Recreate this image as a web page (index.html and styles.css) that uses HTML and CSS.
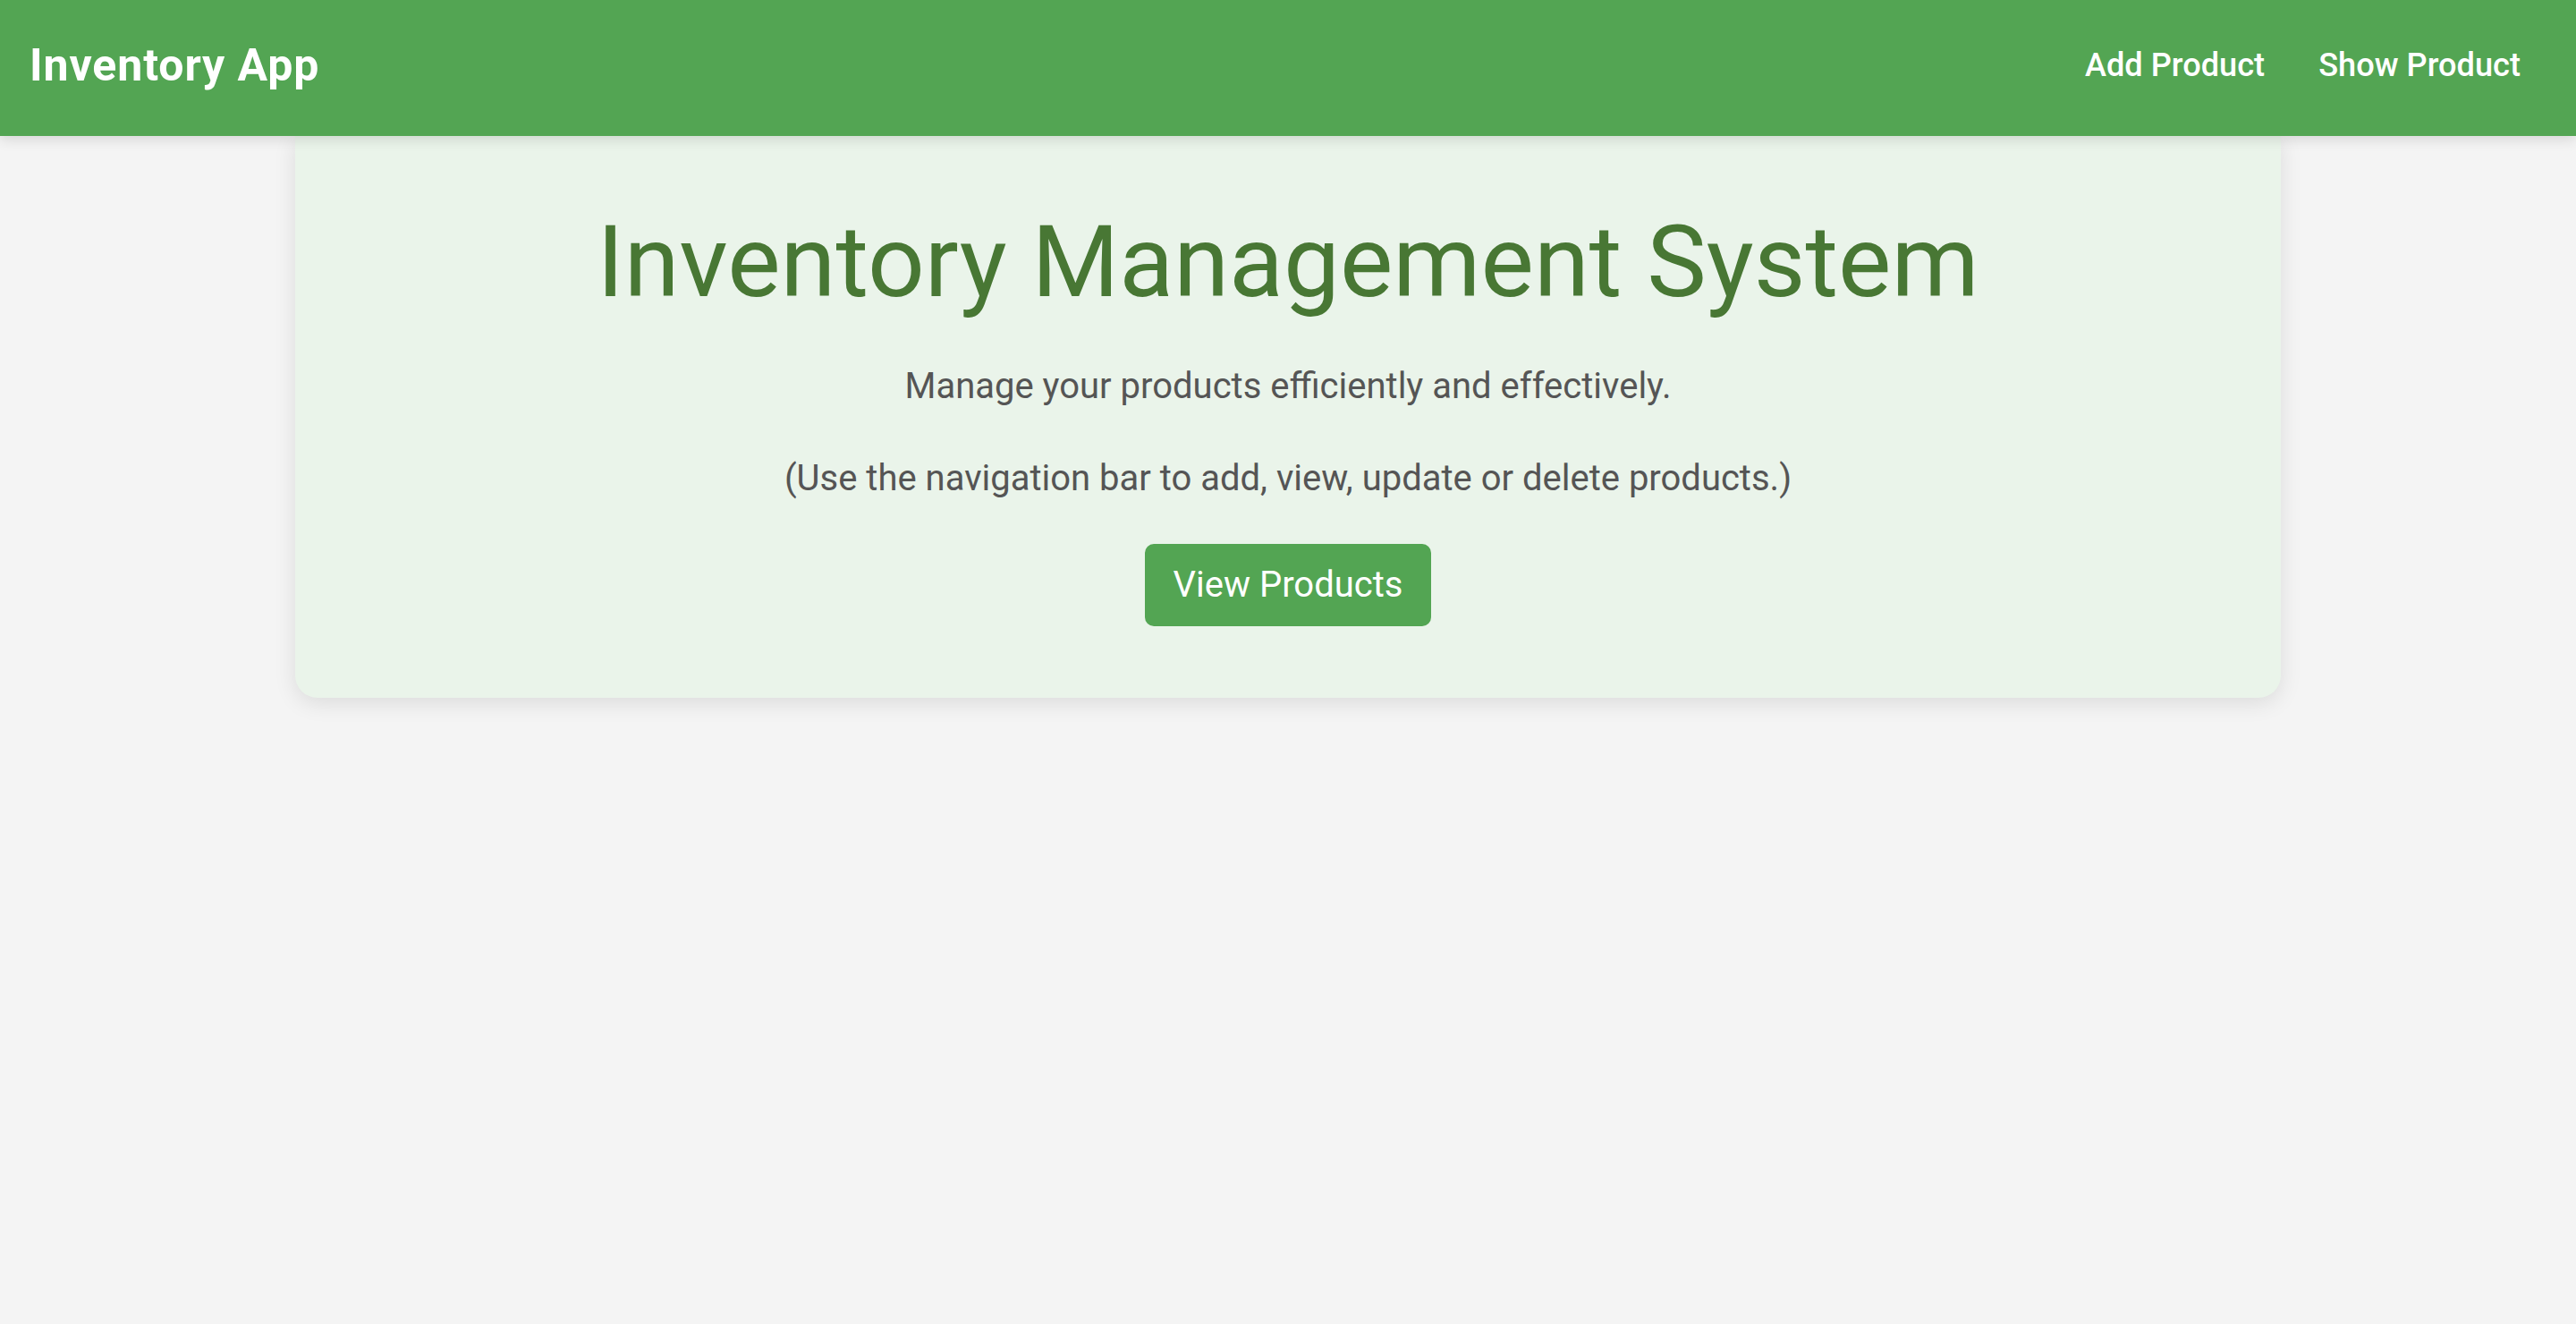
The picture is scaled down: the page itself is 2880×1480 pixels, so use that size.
FILE: index.html
```html
<!DOCTYPE html>
<html lang="en">
<head>
<meta charset="utf-8">
<title>Inventory App</title>
<link rel="stylesheet" href="styles.css">
</head>
<body>
<nav class="navbar">
  <a class="brand" href="#">Inventory App</a>
  <div class="nav-links">
    <a class="nav-link" href="#">Add Product</a>
    <a class="nav-link" href="#">Show Product</a>
  </div>
</nav>
<main class="hero">
  <h1 class="hero-title">Inventory Management System</h1>
  <p class="hero-text">Manage your products efficiently and effectively.</p>
  <p class="hero-text">(Use the navigation bar to add, view, update or delete products.)</p>
  <a class="btn" href="#">View Products</a>
</main>
</body>
</html>
```
FILE: styles.css
```css
* { box-sizing: border-box; }
html, body { margin: 0; padding: 0; }
body {
  background: #f4f4f4;
  font-family: Roboto, "Liberation Sans", Arial, sans-serif;
  min-height: 100vh;
}
a { text-decoration: none; }
.navbar {
  position: relative;
  z-index: 2;
  height: 152px;
  background: #53a553;
  display: flex;
  align-items: center;
  justify-content: space-between;
  padding: 0 62px 7px 33px;
  box-shadow: 0 4px 14px rgba(0,0,0,0.12);
}
.brand {
  color: #fff;
  font-size: 50px;
  font-weight: 700;
  letter-spacing: 0.9px;
}
.nav-links {
  display: flex;
  gap: 60px;
}
.nav-link {
  color: #fff;
  font-size: 36.2px;
  font-weight: 500;
}
.hero {
  width: 2220px;
  margin: 0 auto;
  background: #eaf4ea;
  border-radius: 0 0 25px 25px;
  box-shadow: 0 6px 24px rgba(0,0,0,0.1);
  text-align: center;
  padding: 75px 40px 80px;
  display: flex;
  flex-direction: column;
  align-items: center;
}
.hero-title {
  margin: 0 0 50px;
  font-size: 112px;
  font-weight: 400;
  color: #487734;
  line-height: 131px;
}
.hero-text {
  margin: 0 0 56px;
  font-size: 40px;
  line-height: 47px;
  color: #555;
}
.hero-text + .hero-text { margin-bottom: 50px; }
.btn {
  display: inline-block;
  background: #53a553;
  color: #fff;
  font-size: 40px;
  line-height: 50px;
  padding: 21px 32px;
  border-radius: 10px;
}
```
